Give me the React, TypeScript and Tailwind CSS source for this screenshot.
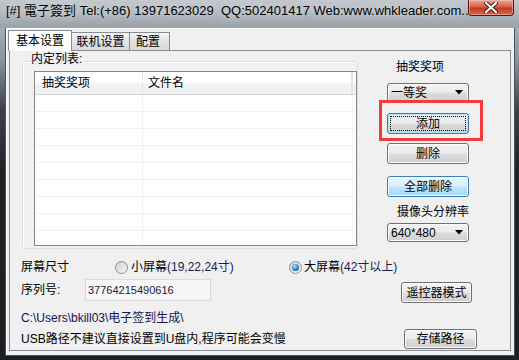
import React from 'react';

const FONT = '"Liberation Sans", "Noto Sans CJK SC", sans-serif';

const face =
  'rounded-[3px] border border-[#707070] bg-[linear-gradient(to_bottom,#f4f4f4_0%,#ebebeb_48%,#dddddd_52%,#cfcfcf_100%)] shadow-[inset_0_0_0_1px_#fbfbfb] text-[12px] leading-none text-black';
const btnGray = 'flex items-center justify-center ' + face;

function Combo({ label }: { label: string }) {
  return (
    <div className={'flex h-[19px] w-[82px] items-center justify-between pl-[3px] pr-[5px] ' + face}>
      <span>{label}</span>
      <svg width="8" height="5" viewBox="0 0 8 5">
        <path d="M0 0 H8 L4 4.5 Z" fill="#000" />
      </svg>
    </div>
  );
}

function Radio({ checked }: { checked?: boolean }) {
  return (
    <div className="flex h-[13px] w-[13px] items-center justify-center rounded-full border border-[#8e8f8f] bg-[linear-gradient(135deg,#cfd0d1,#f7f7f7)]">
      {checked && (
        <div className="h-[7px] w-[7px] rounded-full bg-[radial-gradient(circle_at_40%_35%,#bfe4ff_0%,#3b8ad6_45%,#0e3f7c_100%)]" />
      )}
    </div>
  );
}

export default function App() {
  const rows = Array.from({ length: 9 });

  return (
    <div
      className="relative h-[360px] w-[519px] overflow-hidden bg-[linear-gradient(to_bottom,#b6bdc3_0px,#a4acb3_30px,#8b939a_60px,#3b4147_110px,#1e2328_170px,#1b1f23_360px)]"
      style={{ fontFamily: FONT }}
    >
      {/* title bar */}
      <div className="relative h-[28px] bg-[linear-gradient(to_bottom,#c3c9ce,#a9b1b8_60%,#9aa2a9)]">
        <div
          className="pl-[6px] pt-[3px] text-[13px] leading-[16px] text-black whitespace-nowrap [text-shadow:0_0_6px_rgba(255,255,255,0.8)]"
          style={{ fontFamily: '"Liberation Sans", "Noto Sans CJK TC", sans-serif' }}
        >
          [#] 電子簽到 Tel:(+86) 13971623029&nbsp;&nbsp;QQ:502401417 Web:www.whkleader.com...
        </div>
        <div className="absolute left-[468px] top-0 flex h-[16px] w-[46px] items-center justify-center rounded-b-[4px] border border-t-0 border-[#4d1a14] bg-[linear-gradient(to_bottom,#e9a89a_0%,#d6604a_45%,#c33b22_55%,#d9684a_100%)] shadow-[inset_0_0_0_1px_rgba(255,200,190,0.5)]">
          <svg width="14" height="11" viewBox="0 0 14 11">
            <path d="M2 1 L12 10 M12 1 L2 10" stroke="#3a1a14" strokeWidth="4" strokeLinecap="round" />
            <path d="M2 1 L12 10 M12 1 L2 10" stroke="#fff" strokeWidth="2.2" strokeLinecap="round" />
          </svg>
        </div>
      </div>

      {/* client area */}
      <div className="ml-[6px] h-[327px] w-[508px] bg-[#f0f0f0] shadow-[0_0_0_1px_#4a5157] border-t border-l border-white">
        {/* tabs */}
        <div className="flex h-[21px] items-end pl-[1px] text-[12px] text-black">
          <div className="relative z-10 -mb-[1px] flex h-[21px] w-[64px] items-center justify-center border border-b-0 border-[#898c95] bg-[#fcfcfc] pb-[1px]">
            基本设置
          </div>
          <div className="flex h-[18px] w-[58px] items-center justify-center border border-l-0 border-b-0 border-[#898c95] bg-[linear-gradient(to_bottom,#f3f3f3,#e3e3e3_50%,#d8d8d8)]">
            联机设置
          </div>
          <div className="flex h-[18px] w-[40px] items-center justify-center border border-l-0 border-b-0 border-[#898c95] bg-[linear-gradient(to_bottom,#f3f3f3,#e3e3e3_50%,#d8d8d8)] pr-[3px]">
            配置
          </div>
        </div>

        {/* tab panel */}
        <div className="ml-[2px] h-[301px] w-[502px] border border-[#898c95] bg-[#f0f0f0] text-[12px] text-black">
          {/* top section */}
          <div className="flex h-[198px]">
            <div className="relative ml-[12px] mt-[10px] h-[188px] w-[336px] rounded-[3px] border border-[#d5dfe5] pl-[11px] pt-[9px] shadow-[inset_1px_1px_0_#fff]">
              <div className="absolute left-[7px] top-[-11px] bg-[#f0f0f0] px-[1px] leading-[16px]">内定列表:</div>
              <div className="h-[175px] w-[323px] overflow-hidden border border-[#828790] bg-white">
                <div className="flex h-[23px] border-b border-[#d5d5d5] bg-[linear-gradient(to_bottom,#ffffff_0%,#ffffff_45%,#f1f2f4_55%,#eef0f2_100%)]">
                  <div className="flex w-[108px] items-center border-r border-[#e3e5e8] pl-[7px]">抽奖奖项</div>
                  <div className="flex w-[210px] items-center border-r-[2px] border-[#e3e5e8] pl-[5px]">文件名</div>
                </div>
                {rows.map((_, i) => (
                  <div key={i} className="flex h-[17px] border-b border-[#f0f0f0]">
                    <div className="w-[108px] border-r border-[#f0f0f0]" />
                    <div className="w-[210px] border-r border-[#f0f0f0]" />
                  </div>
                ))}
              </div>
            </div>

            {/* right column */}
            <div className="ml-[29px] flex w-[82px] flex-col">
              <div className="mt-[8px] h-[16px] pl-[9px] leading-[16px]">抽奖奖项</div>
              <div className="mt-[8px]">
                <Combo label="一等奖" />
              </div>
              <div className="mt-[11px] flex h-[21px] w-[82px] items-center justify-center rounded-[3px] border border-[#3c7fb1] bg-[linear-gradient(to_bottom,#f4f4f4_0%,#ebebeb_48%,#dddddd_52%,#cfcfcf_100%)] p-[2px] shadow-[inset_0_0_0_1px_#aee0f8]">
                <div className="flex h-full w-full items-center justify-center border border-dotted border-black">添加</div>
              </div>
              <div className={btnGray + ' mt-[9px] h-[21px] w-[82px]'}>删除</div>
              <div className="mt-[12px] flex h-[21px] w-[82px] items-center justify-center rounded-[3px] border border-[#3c7fb1] bg-[linear-gradient(to_bottom,#eaf6fd_0%,#d9f0fc_48%,#bee6fd_52%,#a7d9f5_100%)] shadow-[inset_0_0_0_1px_#f4fbff]">
                全部删除
              </div>
              <div className="mt-[7px] h-[16px] pl-[10px] leading-[16px] whitespace-nowrap">摄像头分辨率</div>
              <div className="mt-[3px]">
                <Combo label="640*480" />
              </div>
            </div>
          </div>

          {/* screen size */}
          <div className="mt-[10px] flex h-[16px] items-center pl-[11px]">
            <div className="w-[94px]">屏幕尺寸</div>
            <div className="flex w-[174px] items-center gap-[3px]">
              <Radio />
              <span>
                小屏幕<span className="text-[#1c1c4e]">(19,22,24寸)</span>
              </span>
            </div>
            <div className="flex items-center gap-[2px]">
              <Radio checked />
              <span>
                大屏幕<span className="text-[#1c1c4e]">(42寸以上)</span>
              </span>
            </div>
          </div>

          {/* serial */}
          <div className="mt-[4px] flex h-[24px] items-start pl-[11px]">
            <div className="w-[64px] leading-[22px]">序列号:</div>
            <div className="flex h-[22px] w-[126px] items-center border border-[#d9dbe0] bg-[#f6f6f6] pl-[2px] text-[11px] text-[#1a1a40]">
              37764215490616
            </div>
            <div className={btnGray + ' ml-[190px] mt-[3px] h-[21px] w-[71px]'}>遥控器模式</div>
          </div>

          {/* path */}
          <div className="h-[26px] pl-[11px] pt-[7px] leading-[16px] text-[#14144a]">
            C:\Users\bkill03\电子签到生成\
          </div>

          {/* usb note */}
          <div className="flex h-[20px] items-center pl-[11px]">
            <div className="whitespace-nowrap">USB路径不建议直接设置到U盘内,程序可能会变慢</div>
            <div className={btnGray + ' ml-auto mr-[33px] h-[20px] w-[73px]'}>存储路径</div>
          </div>
        </div>
      </div>

      {/* red highlight */}
      <div className="absolute left-[379px] top-[100px] h-[41px] w-[104px] border-[3px] border-[#f03c3c]" />
    </div>
  );
}
